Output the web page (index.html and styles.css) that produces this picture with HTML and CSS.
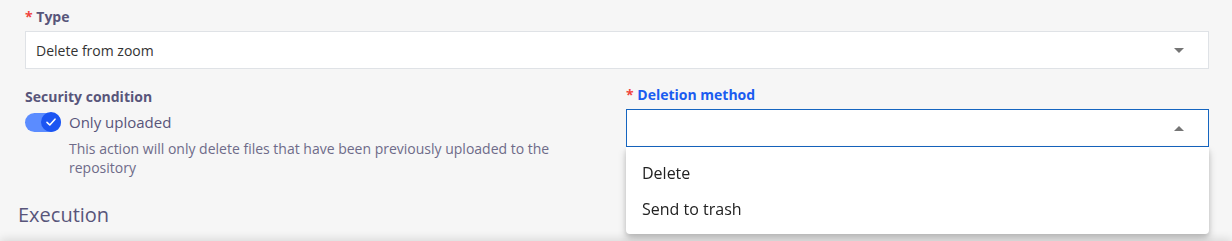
FILE: index.html
```html
<!DOCTYPE html>
<html>
<head>
<meta charset="utf-8">
<link rel="stylesheet" href="styles.css">
</head>
<body>
<div class="page">
  <div class="form">
    <div class="field">
      <label class="label"><span class="req">*</span> Type</label>
      <div class="select">
        <span class="value">Delete from zoom</span>
        <span class="caret down"></span>
      </div>
    </div>
    <div class="row">
      <div class="col">
        <div class="label plain">Security condition</div>
        <div class="toggle-row">
          <span class="toggle">
            <span class="knob">
              <svg width="12" height="12" viewBox="0 0 12 12"><path d="M2 6.3 L4.8 9 L10 3.2" fill="none" stroke="#fff" stroke-width="1.6" stroke-linecap="round" stroke-linejoin="round"/></svg>
            </span>
          </span>
          <span class="toggle-text">Only uploaded</span>
        </div>
        <p class="help">This action will only delete files that have been previously uploaded to the repository</p>
      </div>
      <div class="col right">
        <label class="label active"><span class="req">*</span> Deletion method</label>
        <div class="select focused">
          <span class="value"></span>
          <span class="caret up"></span>
        </div>
        <ul class="menu">
          <li>Delete</li>
          <li>Send to trash</li>
        </ul>
      </div>
    </div>
  </div>
  <h2 class="section">Execution</h2>
</div>
<div class="footer-shadow"></div>
</body>
</html>
```

FILE: styles.css
```css
* { box-sizing: border-box; }
html, body { margin: 0; padding: 0; }
body {
  background: #f6f6f6;
  font-family: "Open Sans", "Noto Sans", sans-serif;
  width: 1232px;
  height: 241px;
  overflow: hidden;
}
.page { padding: 7px 0 0 0; }
.form { padding: 0 23px 0 25px; }
.label {
  display: block;
  font-size: 14px;
  font-weight: 700;
  line-height: 20px;
  color: #58557a;
  margin-bottom: 4px;
}
.label .req { color: #f0443e; }
.label.active { color: #1a5cf0; }
.select {
  position: relative;
  display: flex;
  align-items: center;
  height: 38px;
  background: #fff;
  border: 1px solid #dfe2e6;
  padding: 0 10px;
}
.select.focused { border-color: #1565c0; }
.select .value { font-size: 14px; color: #333; }
.caret {
  margin-left: auto;
  margin-right: 14px;
  width: 0; height: 0;
  border-left: 5px solid transparent;
  border-right: 5px solid transparent;
}
.caret.down { border-top: 5px solid #757575; }
.caret.up { border-bottom: 5px solid #757575; }
.row {
  display: grid;
  grid-template-columns: 583px 583px;
  column-gap: 18px;
  margin-top: 16px;
}
.col { position: relative; }
.col .label.plain { margin-top: 2px; margin-bottom: 5px; }
.toggle-row { display: flex; align-items: center; height: 20px; }
.toggle {
  position: relative;
  display: inline-flex;
  justify-content: flex-end;
  width: 36px;
  height: 19px;
  border-radius: 10px;
  background: #5b8cff;
}
.knob {
  width: 20px; height: 20px;
  margin-top: -0.5px;
  border-radius: 50%;
  background: #1c55f2;
  display: flex; align-items: center; justify-content: center;
}
.toggle-text { margin-left: 8px; font-size: 15px; color: #58557a; }
.help {
  margin: 7px 0 0 44px;
  font-size: 14px;
  line-height: 19px;
  color: #6e6b89;
}
.menu {
  position: absolute;
  left: 0; right: 0;
  top: 62px;
  margin: 0;
  padding: 8px 0 7px;
  list-style: none;
  background: #fff;
  border-radius: 0 0 4px 4px;
  box-shadow: 0 5px 8px rgba(0,0,0,0.18), 0 2px 5px rgba(0,0,0,0.12);
  z-index: 2;
}
.menu li {
  height: 36px;
  line-height: 36px;
  padding: 0 16px;
  font-size: 16px;
  color: #222;
}
.section {
  margin: 25px 0 0 18px;
  font-size: 20px;
  font-weight: 500;
  line-height: 26px;
  color: #58557a;
}
.footer-shadow {
  position: fixed;
  left: 0; right: 0;
  bottom: -12px;
  height: 12px;
  box-shadow: 0 -2px 10px rgba(0,0,0,0.12);
  background: #f0f0f0;
}
```
